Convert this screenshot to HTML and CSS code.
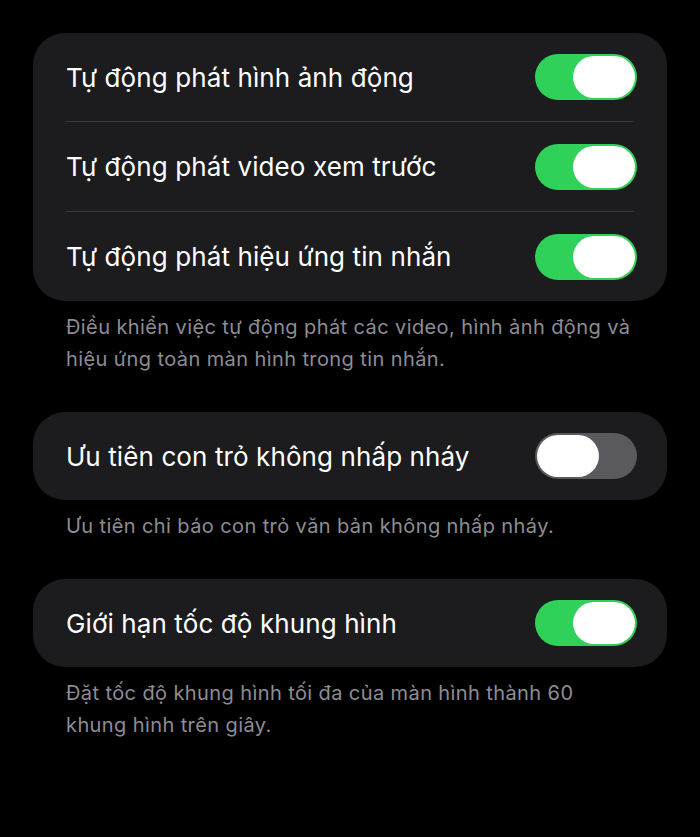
FILE: index.html
```html
<!DOCTYPE html>
<html lang="vi">
<head>
<meta charset="utf-8">
<link rel="stylesheet" href="styles.css">
</head>
<body>
<div class="page">
  <section class="group">
    <div class="card">
      <div class="row">
        <span class="label">Tự động phát hình ảnh động</span>
        <span class="toggle on"><span class="knob"></span></span>
      </div>
      <div class="row">
        <span class="label">Tự động phát video xem trước</span>
        <span class="toggle on"><span class="knob"></span></span>
      </div>
      <div class="row">
        <span class="label">Tự động phát hiệu ứng tin nhắn</span>
        <span class="toggle on"><span class="knob"></span></span>
      </div>
    </div>
    <p class="footer">Điều khiển việc tự động phát các video, hình ảnh động và hiệu ứng toàn màn hình trong tin nhắn.</p>
  </section>
  <section class="group">
    <div class="card">
      <div class="row">
        <span class="label">Ưu tiên con trỏ không nhấp nháy</span>
        <span class="toggle off"><span class="knob"></span></span>
      </div>
    </div>
    <p class="footer">Ưu tiên chỉ báo con trỏ văn bản không nhấp nháy.</p>
  </section>
  <section class="group">
    <div class="card">
      <div class="row">
        <span class="label">Giới hạn tốc độ khung hình</span>
        <span class="toggle on"><span class="knob"></span></span>
      </div>
    </div>
    <p class="footer">Đặt tốc độ khung hình tối đa của màn hình thành 60 khung hình trên giây.</p>
  </section>
</div>
</body>
</html>
```

FILE: styles.css
```css
html, body {
  margin: 0;
  padding: 0;
  background: #000;
  height: 100%;
}
body {
  font-family: Inter, "Noto Sans", sans-serif;
  -webkit-font-smoothing: antialiased;
}
.page {
  padding: 33px 33px 0 33px;
  display: flex;
  flex-direction: column;
  gap: 37px;
}
.card {
  background: #1c1c1e;
  border-radius: 32px;
  padding: 0 30px 0 33px;
}
.row {
  height: 89px;
  display: flex;
  align-items: center;
  justify-content: space-between;
}
.row + .row {
  border-top: 1px solid #38383a;
  margin-right: 3px;
}
.row + .row .toggle { margin-right: -3px; }
.card .row:first-child { height: 88px; margin-right: 0; }
.label {
  color: #fff;
  font-size: 26px;
  letter-spacing: 0.1px;
}
.toggle {
  width: 102px;
  height: 46px;
  border-radius: 23px;
  display: flex;
  align-items: center;
  padding: 0 2px;
  box-sizing: border-box;
  flex: none;
}
.toggle.on {
  background: #30d158;
  justify-content: flex-end;
}
.toggle.off {
  background: #5a5a5e;
  justify-content: flex-start;
}
.knob {
  width: 62px;
  height: 42px;
  border-radius: 21px;
  background: #fff;
}
.footer {
  margin: 0;
  padding: 10px 33px 0 33px;
  color: #8d8d93;
  font-size: 20px;
  letter-spacing: 0.4px;
  line-height: 32px;
}
```
